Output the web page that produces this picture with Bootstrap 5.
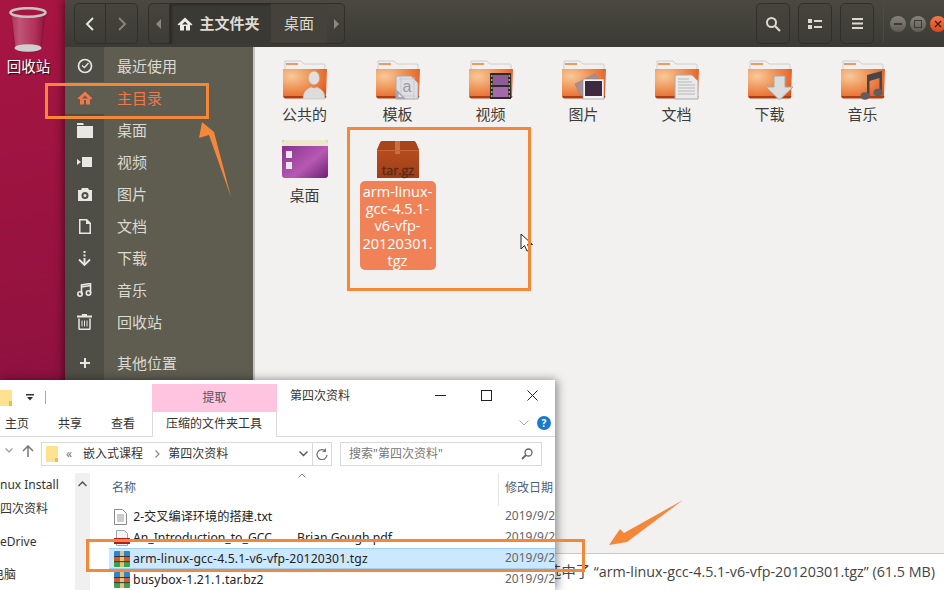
<!DOCTYPE html>
<html lang="zh-CN">
<head>
  <meta charset="UTF-8">
  <meta name="viewport" content="width=device-width, initial-scale=1.0">
  <link href="https://cdn.jsdelivr.net/npm/bootstrap@5.3.0/dist/css/bootstrap.min.css" rel="stylesheet">
  <style>
    html, body { margin: 0; width: 944px; height: 590px; overflow: hidden; }
    body { font-family: "Noto Sans", "Noto Sans CJK SC", sans-serif; }
    .desk { position: relative; width: 944px; height: 590px; overflow: hidden; background: linear-gradient(170deg, #a81543 0%, #93123f 45%, #6c0a4c 100%); }
    /* desktop trash */
    .trash-app { position: absolute; left: 0; top: 7px; width: 57px; text-align: center; color: #fff; font-size: 14.5px; line-height: 20px; text-shadow: 1px 1px 1px #111; }
    .trash-app svg { display: block; margin: 0 0 3px 9px; }

    /* ubuntu file manager */
    .naut { position: absolute; left: 65px; top: 0; width: 879px; height: 590px; box-shadow: -2px 0 8px rgba(0,0,0,.45); }
    .naut-head { height: 47px; background: linear-gradient(#4a4841, #3b3a34); color: #dfdbd2; font-size: 15px; padding: 2px 0 2px 9px; }
    .hbtn { height: 41px; border: 1px solid #302f2a; border-radius: 5px; background: linear-gradient(#46443d, #3e3c36); }
    .hbtn-nav { width: 32px; }
    .nav-l { border-radius: 5px 0 0 5px; }
    .nav-r { border-radius: 0 5px 5px 0; border-left: 0; margin-right: 10px; }
    .crumb-end { width: 22px; border-radius: 5px 0 0 5px; }
    .crumb-on { width: 101px; height: 41px; background: #3a3933; box-shadow: inset 2px 2px 2px #2c2b27; font-weight: 700; gap: 6px; padding-right: 4px; }
    .crumb-off { width: 56px; height: 41px; background: #44423b; border-bottom: 1px solid #302f2a; border-top: 1px solid #302f2a; }
    .crumb-next { width: 18px; border-radius: 0 5px 5px 0; border-left: 0; }
    .tool { width: 34px; margin-right: 8px; }
    .head-sep { width: 1px; height: 36px; background: #4d4b44; margin: 0 6px 0 1px; }
    .wdot { width: 16px; height: 16px; flex: none; border-radius: 50%; margin-right: 4px; background: linear-gradient(#85837c, #5e5c55); }
    .wdot-x { background: linear-gradient(#f47a4a, #d8481a); margin-right: -2px; }
    .naut-main { height: 543px; }
    .side { width: 190px; flex: none; padding-top: 3px; color: #dcdad2; font-size: 15px; background: linear-gradient(to right, #4f4e46 39px, #5f5d50 39px); border-right: 2px solid #c5c4bf; }
    .side-row { height: 32px; }
    .side-ico { width: 39px; flex: none; }
    .side-txt { padding-left: 13px; }
    .side-on { background: #5f5d50; color: #f2774a; }
    .side-gap { margin-top: 9px; }
    .files { flex: 1; background: #f2f1f0; padding: 13px 0 0 3px; color: #3d3c38; font-size: 15px; align-content: flex-start; }
    .fitem { width: 93px; text-align: center; height: 80px; }
    .fitem svg { display: block; margin: 0 auto; }
    .fname { line-height: 20px; margin-top: 4px; }
    .fname-low { margin-top: 5px; }
    .sel-name { width: 76px; margin: 1px auto 0; padding: 2px 0 1px; background: #f18258; color: #fff; border-radius: 5px; font-size: 14.5px; line-height: 17.2px; font-family: "Open Sans", "Noto Sans", sans-serif; }
    .status { position: absolute; left: 0; right: 0; bottom: 0; height: 37px; background: #fff; border-top: 1px solid #c9c8c5; color: #45443f; font-size: 14.3px; padding-right: 9px; font-family: "Open Sans", "Noto Sans CJK SC", sans-serif; white-space: nowrap; }
    .pointer { position: absolute; left: 455px; top: 233px; }

    /* windows explorer */
    .expl { position: absolute; left: 0; top: 380px; width: 555px; height: 210px; background: #fff; color: #333; font-size: 12px; box-shadow: 2px 0 9px rgba(0,0,0,.45); font-family: "Noto Sans", "Noto Sans CJK SC", sans-serif; overflow: hidden; }
    .ex-title { height: 32px; }
    .ex-qa { width: 152px; flex: none; gap: 6px; padding-top: 2px; }
    .ex-qa-sep { width: 1px; height: 13px; background: #aaa; margin-left: 5px; }
    .ex-pink { width: 125px; flex: none; height: 28px; margin-top: 4px; background: #fec4e0; text-align: center; line-height: 28px; color: #555; }
    .ex-name { padding-left: 13px; padding-top: 7px; width: 140px; flex: none; }
    .ex-btns { width: 138px; flex: none; }
    .ex-btn { width: 46px; height: 31px; }
    .ex-tabs { height: 25px; border-bottom: 1px solid #dadbdc; position: relative; }
    .ex-tab { padding-top: 3px; flex: none; }
    .tab-a { width: 58px; padding-left: 5px; }
    .tab-b { width: 53px; }
    .tab-c { width: 41px; }
    .ex-tab-ctx { width: 125px; height: 25px; padding-left: 13px; background: #fff; border-left: 1px solid #dadbdc; border-right: 1px solid #dadbdc; }
    .ex-help { width: 14px; height: 14px; border-radius: 50%; background: #1979ca; color: #fff; font-size: 10px; font-weight: 700; line-height: 14px; text-align: center; }
    .ex-addr { height: 36px; padding-top: 5px; }
    .addr-box { height: 24px; border: 1px solid #d9d9d9; }
    .addr-path { width: 272px; margin-left: 41px; gap: 8px; padding-left: 4px; }
    .addr-step { margin-left: 3px; }
    .addr-go { width: 19px; border-left: 0; }
    .addr-find { width: 202px; margin-left: 8px; padding: 0 8px; color: #777; }
    .ex-body { height: 117px; }
    .ex-tree { width: 75px; flex: none; overflow: hidden; padding-top: 2px; white-space: nowrap; }
    .ex-tree div { height: 24px; line-height: 20px; }
    .ex-tree .t-gap { margin-top: 9px; }
    .ex-clip { margin-left: -8px; }
    .ex-scroll { width: 15px; flex: none; background: #f0f0f0; }
    .ex-list { flex: 1; padding-left: 19px; position: relative; }
    .ex-col { height: 33px; color: #4c607a; }
    .ex-col-a { width: 389px; padding-left: 3px; padding-top: 6px; }
    .ex-col-b { border-left: 1px solid #e5e5e5; padding-left: 6px; padding-top: 6px; white-space: nowrap; }
    .ex-row { height: 21px; line-height: 20px; white-space: nowrap; }
    .ex-f { width: 389px; padding-left: 5px; gap: 3px; font-size: 12.2px; color: #222; overflow: hidden; }
    .ex-d { color: #666; padding-left: 7px; }
    .ex-sel { background: #cce8ff; border-top: 1px solid #99d1ff; border-bottom: 1px solid #99d1ff; line-height: 18px; }
    .ex-wide { letter-spacing: .15px; }
    .pdf-a { width: 161px; flex: none; }

    /* annotations */
    .mark-box { position: absolute; border: 3px solid #f5873a; }
    .box-a { left: 45px; top: 83px; width: 164px; height: 36px; }
    .box-b { left: 347px; top: 127px; width: 184px; height: 164px; }
    .box-c { left: 86px; top: 539px; width: 499px; height: 33px; }
    .arrows { position: absolute; left: 0; top: 0; pointer-events: none; }
  </style>
  <title>主文件夹</title>
</head>
<body>
  <svg width="0" height="0" class="position-absolute">
    <defs>
      <radialGradient id="fg" cx=".2" cy=".25" r=".95">
        <stop offset="0" stop-color="#f8c99b"/><stop offset=".45" stop-color="#ef9558"/><stop offset="1" stop-color="#e2541b"/>
      </radialGradient>
      <linearGradient id="pg" x1="0" y1="0" x2="1" y2="1">
        <stop offset="0" stop-color="#7d2a86"/><stop offset=".6" stop-color="#b759b3"/><stop offset="1" stop-color="#6d1f72"/>
      </linearGradient>
      <linearGradient id="tg" x1="0" y1="0" x2="1" y2="0">
        <stop offset="0" stop-color="#fff" stop-opacity=".12"/><stop offset=".25" stop-color="#fff" stop-opacity=".28"/><stop offset=".7" stop-color="#fff" stop-opacity=".12"/><stop offset="1" stop-color="#000" stop-opacity=".15"/>
      </linearGradient>
      <linearGradient id="bx" x1="0" y1="0" x2="0" y2="1">
        <stop offset="0" stop-color="#c0511f"/><stop offset="1" stop-color="#9d3f18"/>
      </linearGradient>
      <symbol id="folder" viewBox="0 0 46 40">
        <path d="M3 1h16l3 3h20q1 0 1 1v6H3z" fill="#f1f0ee" stroke="#c8c6c2" stroke-width=".8"/>
        <rect x="4" y="3" width="12" height="2" fill="#f09a62"/>
        <path d="M1 9h44l-1 27q0 2-2 2H3q-2 0-2-2z" fill="url(#fg)"/>
        <path d="M1.500 36h43l-.3 1q0 1-2 1.500H3q-1.500-.2-1.500-2.500z" fill="#b23c10"/>
      </symbol>
      <symbol id="rar" viewBox="0 0 16 16">
        <rect x="0" y="0" width="16" height="5.500" rx="1" fill="#2f86cf"/>
        <rect x="0" y="5.500" width="16" height="5" fill="#cf5a2c"/>
        <rect x="0" y="10.500" width="16" height="5.500" rx="1" fill="#3ea14a"/>
        <rect x="6" y="0" width="4" height="16" fill="#e3c27a"/>
        <rect x="0" y="5" width="16" height=".9" fill="#1d2b3a"/>
        <rect x="0" y="10.200" width="16" height=".9" fill="#1d2b3a"/>
      </symbol>
    </defs>
  </svg>

  <div class="desk">
    <div class="trash-app">
      <svg width="38" height="46" viewBox="0 0 38 46">
        <path d="M2 7l4 33q.5 5 13 5t13-5L36 7q-17 6-34 0z" fill="url(#tg)" stroke="#7a1030" stroke-width=".6"/>
        <ellipse cx="19" cy="41" rx="13.500" ry="3.800" fill="#cfcfcf"/>
        <ellipse cx="19" cy="5.500" rx="17.500" ry="4.300" fill="none" stroke="#c4c4c4" stroke-width="2.600"/>
      </svg>
      回收站
    </div>

    <div class="naut">
      <div class="naut-head d-flex align-items-center">
        <div class="hbtn hbtn-nav nav-l d-flex align-items-center justify-content-center">
          <svg width="10" height="14" viewBox="0 0 10 14"><path d="M8 1L2 7l6 6" fill="none" stroke="#e6e3dc" stroke-width="2"/></svg>
        </div>
        <div class="hbtn hbtn-nav nav-r d-flex align-items-center justify-content-center">
          <svg width="10" height="14" viewBox="0 0 10 14"><path d="M2 1l6 6-6 6" fill="none" stroke="#86847c" stroke-width="2"/></svg>
        </div>
        <div class="hbtn crumb-end d-flex align-items-center justify-content-center">
          <svg width="6" height="10" viewBox="0 0 6 10"><path d="M5 0v10L0 5z" fill="#8a8880"/></svg>
        </div>
        <div class="crumb-on d-flex align-items-center justify-content-center">
          <svg width="16" height="14" viewBox="0 0 16 14"><path d="M8 .5L.5 7.500 2 8.500l1-1V13.500h4V9h2v4.500h4V7.500l1 1 1.500-1zM5 7.500L8 4.500l3 3v4H11V7.500H5z" fill="#eeece6" fill-rule="evenodd"/></svg>
          <span>主文件夹</span>
        </div>
        <div class="crumb-off d-flex align-items-center justify-content-center">桌面</div>
        <div class="hbtn crumb-next d-flex align-items-center justify-content-center">
          <svg width="6" height="10" viewBox="0 0 6 10"><path d="M1 0v10l5-5z" fill="#8a8880"/></svg>
        </div>
        <div class="flex-grow-1"></div>
        <div class="hbtn tool d-flex align-items-center justify-content-center">
          <svg width="16" height="16" viewBox="0 0 16 16"><circle cx="6.500" cy="6.500" r="4.500" fill="none" stroke="#dcd9d2" stroke-width="2"/><path d="M10 10l5 5" stroke="#dcd9d2" stroke-width="2.200"/></svg>
        </div>
        <div class="hbtn tool d-flex align-items-center justify-content-center">
          <svg width="14" height="10" viewBox="0 0 14 10"><path d="M0 0h4v4H0zM0 6h4v4H0zM6 1h8v2H6zM6 7h8v2H6z" fill="#dcd9d2"/></svg>
        </div>
        <div class="hbtn tool d-flex align-items-center justify-content-center">
          <svg width="11" height="11" viewBox="0 0 11 11"><path d="M0 0h11v2H0zM0 4.500h11v2H0zM0 9h11v2H0z" fill="#dcd9d2"/></svg>
        </div>
        <div class="head-sep"></div>
        <div class="wdot d-flex align-items-center justify-content-center"><svg width="8" height="2"><rect width="8" height="2" fill="#3c3b36"/></svg></div>
        <div class="wdot d-flex align-items-center justify-content-center"><svg width="8" height="8"><rect x=".5" y=".5" width="7" height="7" fill="none" stroke="#3c3b36"/></svg></div>
        <div class="wdot wdot-x d-flex align-items-center justify-content-center"><svg width="8" height="8"><path d="M1 1l6 6M7 1l-6 6" stroke="#3c2015" stroke-width="1.300"/></svg></div>
      </div>

      <div class="naut-main d-flex">
        <div class="side">
          <div class="side-row d-flex align-items-center">
            <div class="side-ico d-flex justify-content-center"><svg width="16" height="16" viewBox="0 0 16 16"><circle cx="8" cy="8" r="6.500" fill="none" stroke="#e8e7e3" stroke-width="1.700"/><path d="M5 7.500l2.500 2L11.500 5" fill="none" stroke="#e8e7e3" stroke-width="1.300"/></svg></div>
            <div class="side-txt">最近使用</div>
          </div>
          <div class="side-row side-on d-flex align-items-center">
            <div class="side-ico d-flex justify-content-center"><svg width="16" height="14" viewBox="0 0 16 14"><path d="M8 .5L.5 7.500 2 8.500l1-1V13.500h4V9h2v4.500h4V7.500l1 1 1.500-1zM5 7.500L8 4.500l3 3v4H11V7.500H5z" fill="#f2774a" fill-rule="evenodd"/></svg></div>
            <div class="side-txt">主目录</div>
          </div>
          <div class="side-row d-flex align-items-center">
            <div class="side-ico d-flex justify-content-center"><svg width="16" height="15" viewBox="0 0 16 15"><path d="M0 0h6l1 2H0zM0 3h16v12H0z" fill="#e8e7e3"/></svg></div>
            <div class="side-txt">桌面</div>
          </div>
          <div class="side-row d-flex align-items-center">
            <div class="side-ico d-flex justify-content-center"><svg width="15" height="10" viewBox="0 0 15 10"><path d="M5 0h10v10H5zM0 2l4 3-4 3z" fill="#e8e7e3"/></svg></div>
            <div class="side-txt">视频</div>
          </div>
          <div class="side-row d-flex align-items-center">
            <div class="side-ico d-flex justify-content-center"><svg width="14" height="13" viewBox="0 0 14 13"><path d="M4 0h6l1 2h3v11H0V2h3zM7 4a3.500 3.500 0 100 7 3.500 3.500 0 000-7zm0 2a1.500 1.500 0 110 3 1.500 1.500 0 010-3z" fill="#e8e7e3" fill-rule="evenodd"/></svg></div>
            <div class="side-txt">图片</div>
          </div>
          <div class="side-row d-flex align-items-center">
            <div class="side-ico d-flex justify-content-center"><svg width="12" height="15" viewBox="0 0 12 15"><path d="M0 0h8l4 4v11H0zM1.500 1.500v12h9V5H7V1.500z" fill="#e8e7e3" fill-rule="evenodd"/></svg></div>
            <div class="side-txt">文档</div>
          </div>
          <div class="side-row d-flex align-items-center">
            <div class="side-ico d-flex justify-content-center"><svg width="13" height="15" viewBox="0 0 13 15"><path d="M5.500 0h2v2h-2zM5.500 3.500h2v2h-2zM5.500 7h2v5l-1 1-1-1z" fill="#e8e7e3"/><path d="M1 8.500l5.500 5.500L12 8.500" fill="none" stroke="#e8e7e3" stroke-width="1.800"/></svg></div>
            <div class="side-txt">下载</div>
          </div>
          <div class="side-row d-flex align-items-center">
            <div class="side-ico d-flex justify-content-center"><svg width="15" height="14" viewBox="0 0 15 14"><circle cx="3" cy="11" r="2.200" fill="none" stroke="#e8e7e3" stroke-width="1.600"/><circle cx="11.500" cy="10" r="2.200" fill="none" stroke="#e8e7e3" stroke-width="1.600"/><path d="M4.500 11V2l9-1.500V10M4.500 4l9-1.500" fill="none" stroke="#e8e7e3" stroke-width="1.600"/></svg></div>
            <div class="side-txt">音乐</div>
          </div>
          <div class="side-row d-flex align-items-center">
            <div class="side-ico d-flex justify-content-center"><svg width="15" height="16" viewBox="0 0 15 16"><path d="M5 0h5v1.500h5v2H0v-2h5z" fill="#e8e7e3"/><path d="M2 4.500v10q0 .8.800.8h9.400q.8 0 .8-.8v-10" fill="none" stroke="#e8e7e3" stroke-width="1.500"/><path d="M5 6.500v6M7.500 6.500v6M10 6.500v6" stroke="#e8e7e3"/></svg></div>
            <div class="side-txt">回收站</div>
          </div>
          <div class="side-row side-gap d-flex align-items-center">
            <div class="side-ico d-flex justify-content-center"><svg width="10" height="10" viewBox="0 0 10 10"><path d="M4 0h2v4h4v2H6v4H4V6H0V4h4z" fill="#e8e7e3"/></svg></div>
            <div class="side-txt">其他位置</div>
          </div>
        </div>

        <div class="files d-flex flex-wrap">
          <div class="fitem">
            <svg width="46" height="40" viewBox="0 0 46 40"><use href="#folder"/><ellipse cx="32" cy="18" rx="5.500" ry="6.800" fill="#e2e0dc" stroke="#b9b5b0" stroke-width=".5"/><path d="M21 39q0-9 8-12 3 2 6 0 8 3 8 12z" fill="#dedcd8" stroke="#b9b5b0" stroke-width=".5"/></svg>
            <div class="fname">公共的</div>
          </div>
          <div class="fitem">
            <svg width="46" height="40" viewBox="0 0 46 40"><use href="#folder"/><path d="M21 39V16h15l7 7v16z" fill="#dfdfe2" stroke="#aaa"/><path d="M24 19h16M24 36h16M26 17v21M39 17v21" stroke="#c2c3cb" stroke-width=".7"/><text x="32" y="32" font-size="16" fill="#9a9aa2" text-anchor="middle" font-family="Liberation Sans">a</text><path d="M21 39v-10l10 10z" fill="#a6a6ae"/><path d="M23.500 37v-3.500l3.500 3.500z" fill="#e6e6ea"/></svg>
            <div class="fname">模板</div>
          </div>
          <div class="fitem">
            <svg width="46" height="40" viewBox="0 0 46 40"><use href="#folder"/><rect x="22" y="13" width="21" height="26" fill="#2f2a2a"/><rect x="25" y="15" width="15" height="10" fill="#8d5b95"/><rect x="25" y="27" width="15" height="10" fill="#a26aa8"/><path d="M23 15h1.500v2H23zM23 19h1.500v2H23zM23 23h1.500v2H23zM23 27h1.500v2H23zM23 31h1.500v2H23zM23 35h1.500v2H23zM40.500 15h1.500v2h-1.500zM40.500 19h1.500v2h-1.500zM40.500 23h1.500v2h-1.500zM40.500 27h1.500v2h-1.500zM40.500 31h1.500v2h-1.500zM40.500 35h1.500v2h-1.500z" fill="#c99a55"/></svg>
            <div class="fname">视频</div>
          </div>
          <div class="fitem">
            <svg width="46" height="40" viewBox="0 0 46 40"><use href="#folder"/><path d="M14 24l20-10 6 10-20 12z" fill="#a88e98" stroke="#8a8583" stroke-width=".6"/><rect x="22" y="19" width="21" height="20" fill="#f2f2f2" stroke="#888" stroke-width=".6"/><rect x="24" y="21" width="17" height="15" fill="#3d2a40"/></svg>
            <div class="fname">图片</div>
          </div>
          <div class="fitem">
            <svg width="46" height="40" viewBox="0 0 46 40"><use href="#folder"/><path d="M21 39V15h17l6 6v18z" fill="#eaeaea" stroke="#a9a9a9"/><path d="M24 19h11M24 22h14M24 25h17M24 28h17M24 31h17M24 34h17" stroke="#aaa" stroke-width=".8"/></svg>
            <div class="fname">文档</div>
          </div>
          <div class="fitem">
            <svg width="46" height="40" viewBox="0 0 46 40"><use href="#folder"/><path d="M27 16h11v11h8L32.500 40 19 27h8z" fill="#dcdcdc" stroke="#a8a8a8"/></svg>
            <div class="fname">下载</div>
          </div>
          <div class="fitem">
            <svg width="46" height="40" viewBox="0 0 46 40"><use href="#folder"/><path d="M27 15l15-4v22h-2.500V18l-10 3v15H27z" fill="#45454a"/><ellipse cx="25" cy="36" rx="4.500" ry="3.700" fill="#5f5f63"/><ellipse cx="38" cy="32.500" rx="4.500" ry="3.700" fill="#5f5f63"/></svg>
            <div class="fname">音乐</div>
          </div>
          <div class="fitem">
            <svg width="46" height="40" viewBox="0 0 46 40"><rect x="0" y="0" width="46" height="38" rx="3" fill="url(#pg)"/><path d="M3 0h40q3 0 3 3v3H0V3q0-3 3-3z" fill="#ece8cc"/><rect x="4" y="11" width="6" height="7" fill="#ece6ea"/><rect x="4" y="22" width="6" height="7" fill="#ece6ea"/></svg>
            <div class="fname fname-low">桌面</div>
          </div>
          <div class="fitem">
            <svg width="46" height="40" viewBox="0 0 46 40"><path d="M7 1h32q1 0 2 2l3 7v28H2V10l3-7q1-2 2-2z" fill="url(#bx)"/><path d="M2 10l3-7q1-2 2-2h32q1 0 2 2l3 7z" fill="#a8441b"/><rect x="20" y="1" width="5" height="13" fill="#c96f42"/><rect x="2" y="10" width="42" height="1" fill="#c7663a"/><text x="23" y="35" font-size="12.500" fill="#5a2a14" stroke="#5a2a14" stroke-width=".4" text-anchor="middle" font-family="Open Sans, sans-serif">tar.gz</text></svg>
            <div class="sel-name">arm-linux-gcc-4.5.1-v6-vfp-20120301.<wbr>tgz</div>
          </div>
        </div>
      </div>

      <div class="status d-flex align-items-center justify-content-end">已选中了 “arm-linux-gcc-4.5.1-v6-vfp-20120301.tgz” (61.5 MB)</div>
      <svg class="pointer" width="14" height="20" viewBox="0 0 14 20"><path d="M1 1v15l3.500-3.500L7 18l3-1-2.500-5.500H12.500z" fill="#fff" stroke="#222"/></svg>
    </div>

    <div class="expl">
      <div class="ex-title d-flex">
        <div class="ex-qa d-flex align-items-center">
          <svg width="12" height="17" viewBox="0 0 12 17"><path d="M0 1h12v16H0z" fill="#ffe28f"/><path d="M9 12h3v5H9z" fill="#e8bd50"/></svg>
          <svg class="ms-2" width="8" height="7" viewBox="0 0 8 7"><path d="M0 0h8v1.500H0zM1 3h6L4 6.500z" fill="#333"/></svg>
          <div class="ex-qa-sep"></div>
        </div>
        <div class="ex-pink">提取</div>
        <div class="ex-name">第四次资料</div>
        <div class="ex-btns d-flex">
          <div class="ex-btn d-flex align-items-center justify-content-center"><svg width="11" height="11" viewBox="0 0 11 11"><path d="M0 5.500h11" stroke="#222"/></svg></div>
          <div class="ex-btn d-flex align-items-center justify-content-center"><svg width="11" height="11" viewBox="0 0 11 11"><rect x=".5" y=".5" width="10" height="10" fill="none" stroke="#222"/></svg></div>
          <div class="ex-btn d-flex align-items-center justify-content-center"><svg width="11" height="11" viewBox="0 0 11 11"><path d="M.5.500l10 10M10.500.5l-10 10" stroke="#222"/></svg></div>
        </div>
      </div>

      <div class="ex-tabs d-flex">
        <div class="ex-tab tab-a">主页</div>
        <div class="ex-tab tab-b">共享</div>
        <div class="ex-tab tab-c">查看</div>
        <div class="ex-tab ex-tab-ctx">压缩的文件夹工具</div>
        <div class="flex-grow-1"></div>
        <svg class="me-2 mt-2" width="10" height="6" viewBox="0 0 10 6"><path d="M.5.500L5 5 9.500.5" fill="none" stroke="#a8a8a8"/></svg>
        <div class="ex-help me-1 mt-1">?</div>
      </div>

      <div class="ex-addr d-flex align-items-start position-relative">
        <svg class="position-absolute" style="left:5px;top:11px" width="8" height="5" viewBox="0 0 8 5"><path d="M.5.500L4 4 7.500.5" fill="none" stroke="#999" stroke-width="1.200"/></svg>
        <svg class="position-absolute" style="left:22px;top:8px" width="12" height="12" viewBox="0 0 12 12"><path d="M6 12V1M1 6l5-5 5 5" fill="none" stroke="#777" stroke-width="1.500"/></svg>
        <div class="addr-box addr-path d-flex align-items-center">
          <svg width="12" height="16" viewBox="0 0 12 16"><path d="M0 0h12v16H0z" fill="#ffe28f"/><path d="M9 12h3v4H9z" fill="#e8bd50"/></svg>
          <span class="text-secondary">«</span>
          <span class="addr-step">嵌入式课程</span>
          <svg class="ms-1" width="5" height="8" viewBox="0 0 5 8"><path d="M.5.500L4 4 .5 7.500" fill="none" stroke="#888" stroke-width="1.200"/></svg>
          <span>第四次资料</span>
          <svg class="ms-auto me-1" width="9" height="6" viewBox="0 0 9 6"><path d="M.5.500L4.500 4.500 8.500.5" fill="none" stroke="#555" stroke-width="1.400"/></svg>
        </div>
        <div class="addr-box addr-go d-flex align-items-center justify-content-center">
          <svg width="12" height="12" viewBox="0 0 12 12"><path d="M9.500 3A5 5 0 1011 7" fill="none" stroke="#777" stroke-width="1.300"/><path d="M10 0v4H6z" fill="#777"/></svg>
        </div>
        <div class="addr-box addr-find d-flex align-items-center justify-content-between">
          <span>搜索"第四次资料"</span>
          <svg width="12" height="12" viewBox="0 0 12 12"><circle cx="7.500" cy="4.500" r="3.500" fill="none" stroke="#666" stroke-width="1.300"/><path d="M5 7l-4 4" stroke="#666" stroke-width="1.800"/></svg>
        </div>
      </div>

      <div class="ex-body d-flex">
        <div class="ex-tree">
          <div>nux Install</div>
          <div>四次资料</div>
          <div class="t-gap">eDrive</div>
          <div class="t-gap ex-clip">电脑</div>
        </div>
        <div class="ex-scroll d-flex justify-content-center pt-2">
          <svg width="9" height="6" viewBox="0 0 9 6"><path d="M.5 5L4.500 1l4 4" fill="none" stroke="#555" stroke-width="1.500"/></svg>
        </div>
        <div class="ex-list">
          <svg class="position-absolute" style="left:208px;top:0" width="8" height="5" viewBox="0 0 8 5"><path d="M.5 4.500L4 1l3.500 3.500" fill="none" stroke="#888"/></svg>
          <div class="ex-col d-flex">
            <div class="ex-col-a">名称</div>
            <div class="ex-col-b">修改日期</div>
          </div>
          <div class="ex-row d-flex">
            <div class="ex-f d-flex align-items-center"><svg width="13" height="16" viewBox="0 0 13 16"><path d="M.5.500h8l4 4v11H.5z" fill="#fff" stroke="#8a8a8a"/><path d="M3 6h7M3 8h7M3 10h7M3 12h7" stroke="#9a9a9a"/></svg>&nbsp;2-交叉编译环境的搭建.txt</div>
            <div class="ex-d">2019/9/2</div>
          </div>
          <div class="ex-row d-flex">
            <div class="ex-f d-flex align-items-center"><svg width="16" height="16" viewBox="0 0 16 16"><path d="M2.500.5h8l3 3v12h-11z" fill="#f4f4f6" stroke="#9aa"/><rect x="0" y="8" width="16" height="6" fill="#b3201c"/></svg><span class="pdf-a">An_Introduction_to_GCC</span><span>Brian Gough.pdf</span></div>
            <div class="ex-d">2019/9/2</div>
          </div>
          <div class="ex-row ex-sel d-flex">
            <div class="ex-f d-flex align-items-center"><svg width="16" height="16"><use href="#rar"/></svg><span class="ex-wide">arm-linux-gcc-4.5.1-v6-vfp-20120301.tgz</span></div>
            <div class="ex-d">2019/9/2</div>
          </div>
          <div class="ex-row d-flex">
            <div class="ex-f d-flex align-items-center"><svg width="16" height="16"><use href="#rar"/></svg><span class="ex-wide">busybox-1.21.1.tar.bz2</span></div>
            <div class="ex-d">2019/9/2</div>
          </div>
        </div>
      </div>
    </div>

    <div class="mark-box box-a"></div>
    <div class="mark-box box-b"></div>
    <div class="mark-box box-c"></div>
    <svg class="arrows" width="944" height="590" viewBox="0 0 944 590">
      <path d="M202 122L214 132 231 197 209 135 199 138z" fill="#f5873a"/>
      <path d="M609 545L620 529 624 533 683 500 627 542z" fill="#f5873a"/>
    </svg>
  </div>

  <script src="https://cdn.jsdelivr.net/npm/bootstrap@5.3.0/dist/js/bootstrap.bundle.min.js"></script>
</body>
</html>
